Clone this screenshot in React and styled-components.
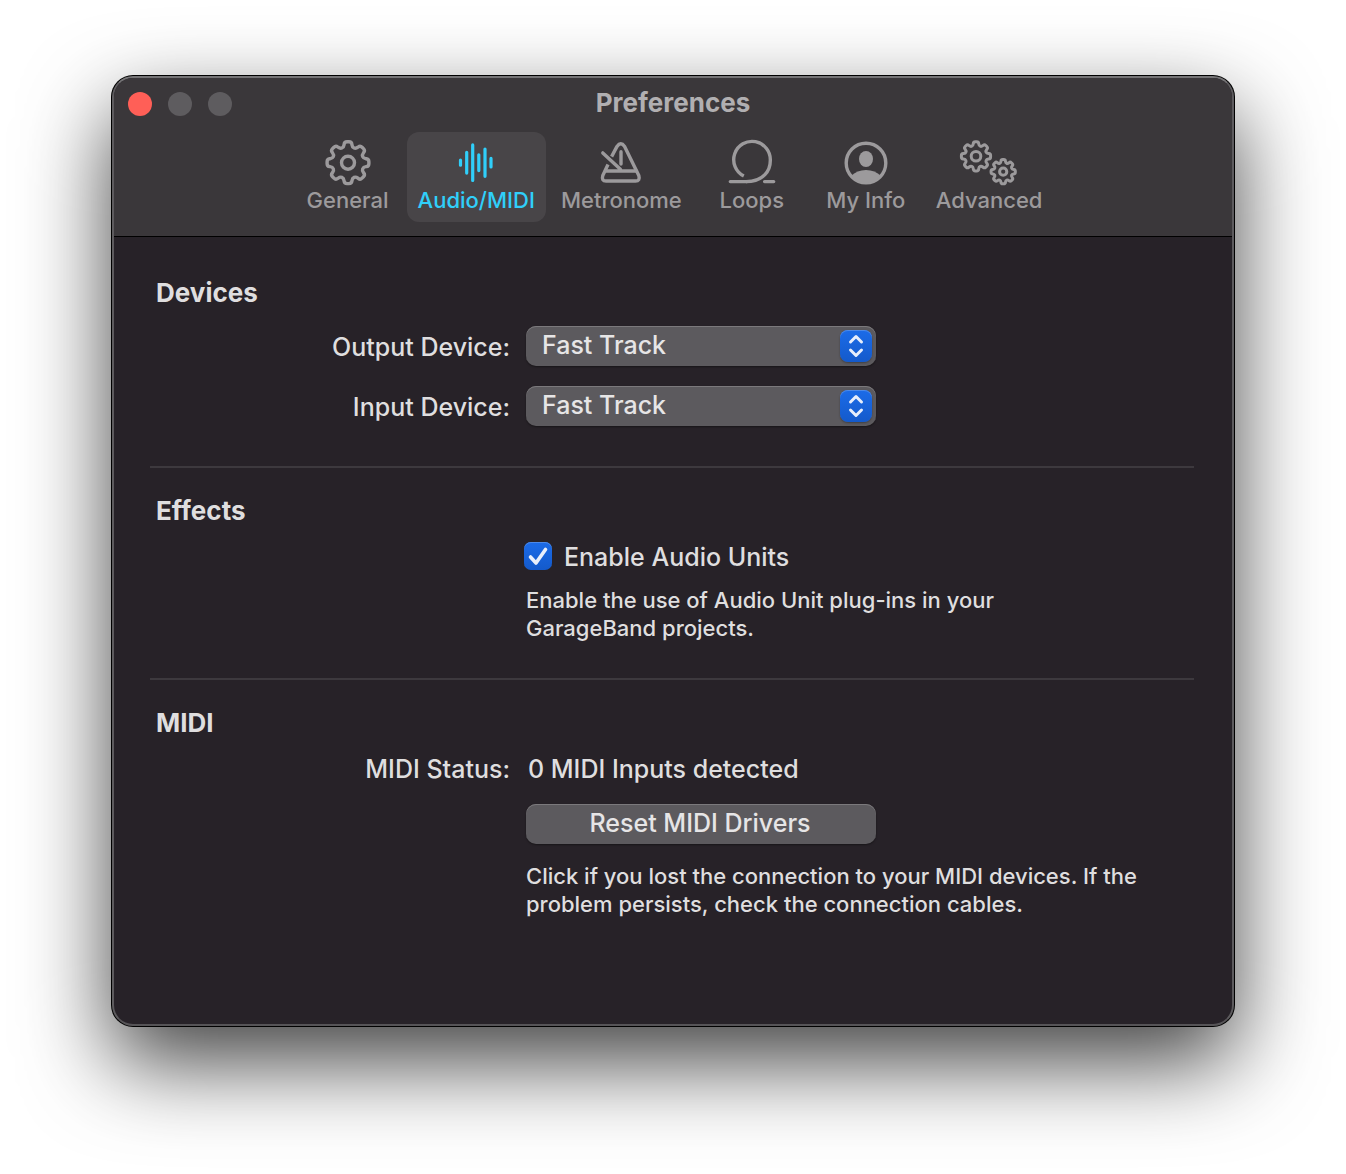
import React, { useState } from "react";
import styled, { createGlobalStyle, css } from "styled-components";

const GlobalStyle = createGlobalStyle`
  *, *::before, *::after { box-sizing: border-box; }
  body {
    margin: 0;
    background: #ffffff;
    font-family: Inter, "Liberation Sans", sans-serif;
    color: #dfdedf;
  }
  button, select, input { font: inherit; color: inherit; margin: 0; }
`;

const Page = styled.div`
  padding: 76px 112px 148px;
`;

const Window = styled.main`
  display: flex;
  flex-direction: column;
  min-height: 950px;
  border: 2px solid;
  border-color: #757476 #5d5b5e #565457 #5d5b5e;
  border-radius: 21px;
  background: #272228;
  box-shadow: 0 0 0 1px #000000, 0 36px 88px rgba(0, 0, 0, 0.75);
`;

const Header = styled.header`
  background: #3a373a;
  border-bottom: 1px solid #000000;
  border-radius: 19px 19px 0 0;
  padding-bottom: 14px;
`;

const TitleBar = styled.div`
  display: grid;
  grid-template-columns: 1fr auto 1fr;
  align-items: center;
  height: 52px;
  padding: 0 14px;
`;

const WindowControls = styled.div`
  display: flex;
  gap: 16px;
`;

const WindowControl = styled.button`
  width: 24px;
  height: 24px;
  padding: 0;
  border: 0;
  border-radius: 50%;
  background: ${(p) => p.$color};
`;

const Title = styled.h1`
  margin: 0;
  padding-bottom: 2px;
  font-size: 26px;
  font-weight: 700;
  line-height: 32px;
  color: #b1afb1;
`;

const Toolbar = styled.nav`
  display: flex;
  justify-content: center;
  gap: 4px;
  padding-top: 2px;
`;

const Tab = styled.button`
  display: flex;
  flex-direction: column;
  align-items: center;
  min-width: 110px;
  height: 90px;
  padding: 6px 11px;
  border: 0;
  border-radius: 12px;
  background: ${(p) => (p.$active ? "#484548" : "transparent")};
  color: ${(p) => (p.$active ? "#30cffa" : "#9c9a9c")};
`;

const TabLabel = styled.span`
  font-size: 22px;
  font-weight: 450;
  line-height: 28px;
  white-space: nowrap;
`;

const Icon = styled.svg`
  display: block;
  height: 48px;
  fill: none;
  stroke: currentColor;
  stroke-width: 3.4;
  stroke-linecap: round;
  stroke-linejoin: round;
`;

const Content = styled.div`
  padding: 13px 38px 0 36px;
`;

const Section = styled.section`
  padding: 27px 0 ${(p) => p.$bottom || 36}px 6px;
  & + & {
    border-top: 2px solid #3d393e;
  }
`;

const Heading = styled.h2`
  margin: 0 0 13px;
  font-size: 26px;
  font-weight: 700;
  line-height: 32px;
`;

const Fields = styled.div`
  display: grid;
  grid-template-columns: 354px minmax(0, 1fr);
  column-gap: 16px;
  row-gap: ${(p) => p.$gap || 14}px;
  align-items: center;
  padding-top: ${(p) => p.$top || 0}px;
`;

const bodyText = css`
  padding-top: 2px;
  font-size: 25px;
  font-weight: 500;
  line-height: 30px;
`;

const FieldLabel = styled.label`
  ${bodyText}
  text-align: right;
`;

const StatusLabel = styled.span`
  ${bodyText}
  text-align: right;
`;

const Status = styled.output`
  ${bodyText}
  padding-left: 2px;
`;

const controlFace = css`
  width: 350px;
  height: 40px;
  border: 0;
  border-radius: 10px;
  background: #5c5a5e;
  box-shadow: inset 0 1px 0 #7b797c, 0 1px 2px rgba(0, 0, 0, 0.4);
  color: #e6e5e6;
  font-size: 25px;
  font-weight: 500;
  line-height: 36px;
`;

const SelectBox = styled.div`
  position: relative;
  width: 350px;
  height: 40px;
`;

const Select = styled.select`
  ${controlFace}
  appearance: none;
  display: block;
  padding: 0 44px 2px 16px;
`;

const Stepper = styled.svg`
  position: absolute;
  top: 4px;
  right: 4px;
  width: 32px;
  height: 32px;
  border-radius: 8px;
  background: linear-gradient(#1b6be8, #145acb);
  box-shadow: inset 0 1px 0 #4b89ea, 0 1px 2px rgba(0, 0, 0, 0.3);
  pointer-events: none;
`;

const PushButton = styled.button`
  ${controlFace}
  padding: 0 2px 2px 0;
`;

const InColumn = styled.div`
  grid-column: 2;
  display: flex;
  flex-direction: column;
  align-items: flex-start;
  gap: 18px;
`;

const CheckLabel = styled.label`
  display: flex;
  align-items: center;
  gap: 12px;
  margin-left: -2px;
`;

const CheckText = styled.span`
  ${bodyText}
`;

const CheckBox = styled.span`
  display: grid;
  width: 28px;
  height: 28px;
  & > * { grid-area: 1 / 1; }
`;

const CheckInput = styled.input`
  appearance: none;
  width: 28px;
  height: 28px;
  border-radius: 7px;
  background: #5c5a5e;
  box-shadow: inset 0 1px 0 #7b797c;
  &:checked {
    background: linear-gradient(#1b6be8, #145acb);
    box-shadow: inset 0 1px 0 #4b89ea;
  }
  & + svg { visibility: hidden; pointer-events: none; }
  &:checked + svg { visibility: visible; }
`;

const Note = styled.p`
  grid-column: 2;
  margin: 0;
  max-width: ${(p) => p.$width}px;
  font-size: 22px;
  font-weight: 450;
  line-height: 28px;
`;

/* Closed outline of an eight-toothed gear with softened corners. */
function gearPath(cx, cy, outer, inner, soft) {
  const pts = [];
  const step = Math.PI / 4;
  for (let i = 0; i < 8; i++) {
    const a = i * step - Math.PI / 2;
    [[-0.27, inner], [-0.17, outer], [0.17, outer], [0.27, inner]].forEach(([d, r]) => {
      pts.push([cx + r * Math.cos(a + d), cy + r * Math.sin(a + d)]);
    });
  }
  const toward = (p, q) => {
    const len = Math.hypot(q[0] - p[0], q[1] - p[1]);
    const t = Math.min(soft, len / 2) / len;
    return [p[0] + (q[0] - p[0]) * t, p[1] + (q[1] - p[1]) * t];
  };
  const f = (p) => p.map((n) => n.toFixed(2)).join(" ");
  return (
    pts
      .map((p, i) => {
        const before = toward(p, pts[(i + pts.length - 1) % pts.length]);
        const after = toward(p, pts[(i + 1) % pts.length]);
        return `${i ? "L" : "M"}${f(before)} Q${f(p)} ${f(after)}`;
      })
      .join(" ") + " Z"
  );
}

const GeneralIcon = () => (
  <Icon width="48" viewBox="0 0 48 48" aria-hidden="true">
    <path d={gearPath(24, 24.7, 21.2, 16, 2.6)} />
    <circle cx="24" cy="24.7" r="6.5" />
  </Icon>
);

const AudioIcon = () => (
  <Icon width="48" viewBox="0 0 48 48" aria-hidden="true">
    <path strokeWidth="3.2" d="M8.5 22.2v5M14.7 14.3v20.8M20.7 6.9v35.6M26.8 16.8v15.8M33 11.1v27.2M39 20.4v8.6" />
  </Icon>
);

const MetronomeIcon = () => (
  <Icon width="48" viewBox="0 0 48 48" aria-hidden="true">
    <path strokeLinecap="butt" d="M14.6 18.6L20 8.4Q23.8 3 27.6 8.4L41.8 37.5Q43.4 43 38.5 43H9Q4.2 43 5.8 37.5L11 26.6" />
    <path d="M8.5 33H39.5M5.8 14.9L23.4 31.3M24 13.8V26" />
  </Icon>
);

const LoopsIcon = () => (
  <Icon width="48" viewBox="0 0 48 48" aria-hidden="true">
    <path strokeLinecap="butt" d="M15.8 38A18.3 18.3 0 1 1 42.3 22.7C42.3 32 36 43.6 18 43.6" />
    <path d="M19 43.6H2.3M36.6 43.6H45.7" />
  </Icon>
);

const MyInfoIcon = () => (
  <Icon width="48" viewBox="0 0 48 48" aria-hidden="true">
    <circle cx="24" cy="25" r="19.8" />
    <ellipse cx="24" cy="21" rx="7" ry="8" fill="currentColor" stroke="none" />
    <path d="M9 38C13 34 18 32 24 32S35 34 39 38A20 20 0 0 1 9 38Z" fill="currentColor" stroke="none" />
  </Icon>
);

const AdvancedIcon = () => (
  <Icon width="60" viewBox="0 0 60 48" aria-hidden="true">
    <g strokeWidth="3">
      <path d={gearPath(17, 18.3, 14.8, 11, 1.8)} />
      <circle cx="17" cy="18.3" r="4.8" />
      <path d={gearPath(44.2, 33.7, 12.3, 9.2, 1.5)} />
      <circle cx="44.2" cy="33.7" r="3.6" />
    </g>
  </Icon>
);

const tabs = [
  ["General", GeneralIcon],
  ["Audio/MIDI", AudioIcon],
  ["Metronome", MetronomeIcon],
  ["Loops", LoopsIcon],
  ["My Info", MyInfoIcon],
  ["Advanced", AdvancedIcon],
];

function DeviceField({ id, label }) {
  return (
    <>
      <FieldLabel htmlFor={id}>{label}</FieldLabel>
      <SelectBox>
        <Select id={id} defaultValue="Fast Track">
          <option>Fast Track</option>
        </Select>
        <Stepper viewBox="0 0 32 32" fill="none" stroke="#e6edfb" strokeWidth="3" strokeLinecap="round" strokeLinejoin="round" aria-hidden="true">
          <path d="M10.5 12L16 6.5L21.5 12M10.5 20L16 25.5L21.5 20" />
        </Stepper>
      </SelectBox>
    </>
  );
}

export default function App() {
  const [active, setActive] = useState("Audio/MIDI");
  return (
    <>
      <GlobalStyle />
      <Page>
        <Window>
          <Header>
            <TitleBar>
              <WindowControls>
                <WindowControl $color="#ff5f57" aria-label="Close" />
                <WindowControl $color="#5e5c5f" aria-label="Minimize" />
                <WindowControl $color="#5e5c5f" aria-label="Zoom" />
              </WindowControls>
              <Title>Preferences</Title>
            </TitleBar>
            <Toolbar>
              {tabs.map(([name, TabIcon]) => (
                <Tab key={name} $active={name === active} onClick={() => setActive(name)}>
                  <TabIcon />
                  <TabLabel>{name}</TabLabel>
                </Tab>
              ))}
            </Toolbar>
          </Header>
          <Content>
            <Section $bottom={40}>
              <Heading>Devices</Heading>
              <Fields $gap={20} $top={4}>
                <DeviceField id="output" label="Output Device:" />
                <DeviceField id="input" label="Input Device:" />
              </Fields>
            </Section>
            <Section>
              <Heading>Effects</Heading>
              <Fields>
                <InColumn>
                  <CheckLabel>
                    <CheckBox>
                      <CheckInput type="checkbox" defaultChecked />
                      <svg width="28" height="28" viewBox="0 0 28 28" fill="none" stroke="#e9effb" strokeWidth="3.6" strokeLinecap="round" strokeLinejoin="round" aria-hidden="true">
                        <path d="M6.5 15L12 21L21.5 7.5" />
                      </svg>
                    </CheckBox>
                    <CheckText>Enable Audio Units</CheckText>
                  </CheckLabel>
                </InColumn>
                <Note $width={500}>Enable the use of Audio Unit plug-ins in your GarageBand projects.</Note>
              </Fields>
            </Section>
            <Section>
              <Heading>MIDI</Heading>
              <Fields $gap={20}>
                <StatusLabel>MIDI Status:</StatusLabel>
                <Status>0 MIDI Inputs detected</Status>
                <InColumn>
                  <PushButton>Reset MIDI Drivers</PushButton>
                  <Note $width={640}>
                    Click if you lost the connection to your MIDI devices. If the problem persists, check the connection cables.
                  </Note>
                </InColumn>
              </Fields>
            </Section>
          </Content>
        </Window>
      </Page>
    </>
  );
}
